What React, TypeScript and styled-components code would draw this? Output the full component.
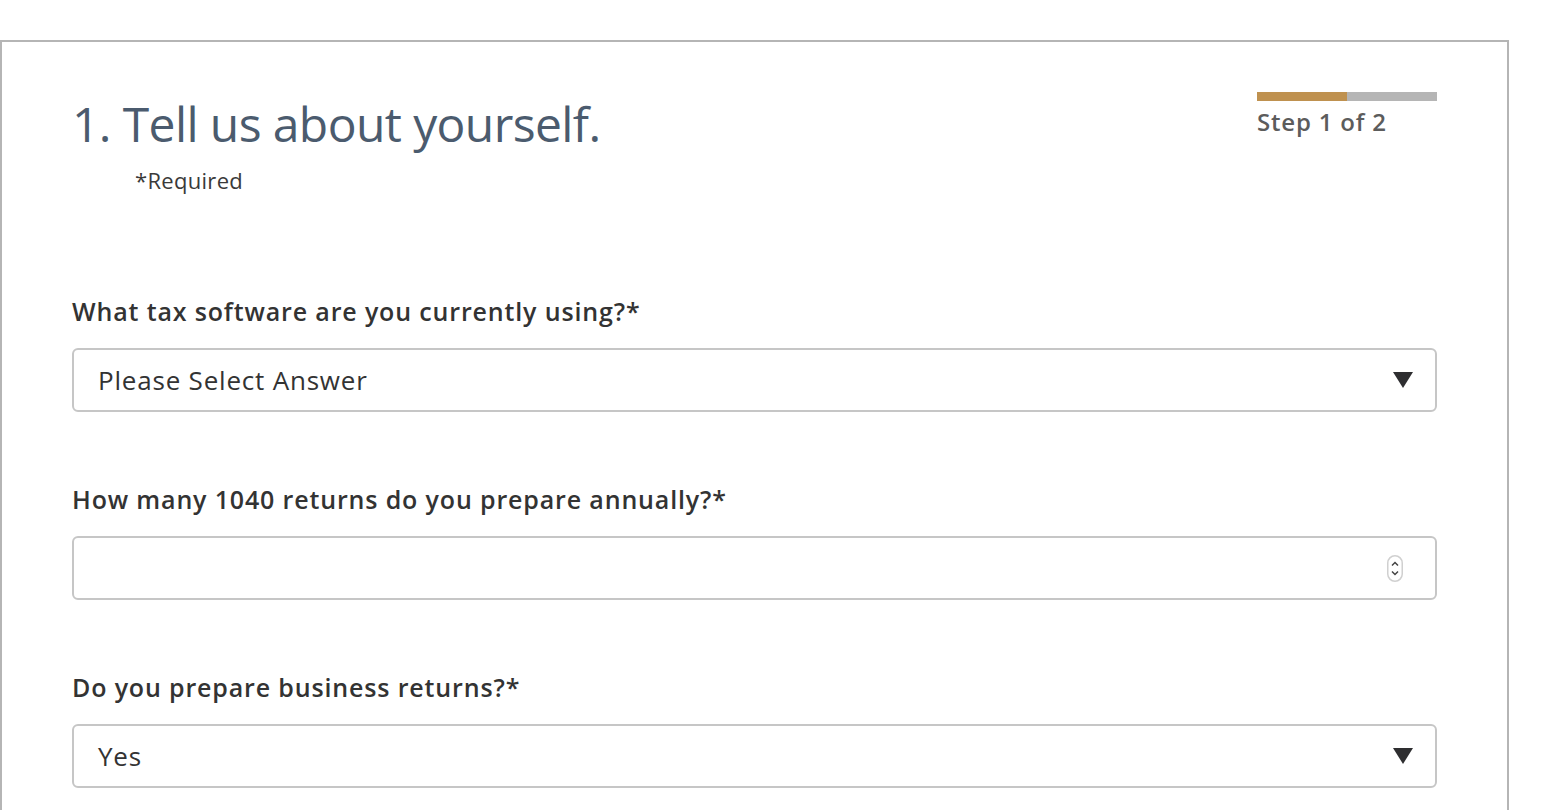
import React from "react";
import styled, { createGlobalStyle } from "styled-components";

const Global = createGlobalStyle`
  html, body { margin: 0; padding: 0; background: #fff; }
  body { font-family: "Open Sans", Lato, sans-serif; overflow: hidden; }
`;

const Card = styled.div`
  margin-top: 40px;
  width: 1509px;
  box-sizing: border-box;
  border: 2px solid #b5b5b5;
  padding: 0 70px 0 70px;
  height: 900px;
`;

const Header = styled.div`
  display: flex;
  justify-content: space-between;
  align-items: flex-start;
`;

const TitleBlock = styled.div`
  padding-top: 51px;
`;

const Title = styled.h1`
  margin: 0;
  font-family: "Open Sans", sans-serif;
  font-weight: 400;
  font-size: 48px;
  line-height: 62px;
  color: #4b5b6e;
  letter-spacing: -0.6px;
`;

const Required = styled.div`
  margin: 12px 0 0 63px;
  font-size: 22px;
  line-height: 26px;
  color: #3a3a3a;
  letter-spacing: 0.3px;
`;

const Stepper = styled.div`
  width: 180px;
  padding-top: 50px;
`;

const Bar = styled.div`
  display: flex;
  height: 9px;
  background: #b5b5b5;
`;

const BarFill = styled.div<{ $pct: number }>`
  width: ${(p) => p.$pct}%;
  background: #bf914f;
`;

const StepText = styled.div`
  margin-top: 6px;
  font-size: 24px;
  line-height: 30px;
  color: #5c5c5c;
  font-weight: 600;
  letter-spacing: 0.8px;
`;

const Fields = styled.div`
  padding-top: 103px;
  display: flex;
  flex-direction: column;
  gap: 72px;
`;

const Field = styled.div`
  display: flex;
  flex-direction: column;
  gap: 22px;
`;

const Label = styled.label`
  font-size: 25px;
  line-height: 30px;
  font-weight: 600;
  color: #333;
  letter-spacing: 0.85px;
`;

const Box = styled.div`
  height: 64px;
  box-sizing: border-box;
  border: 2px solid #c6c6c6;
  border-radius: 6px;
  display: flex;
  align-items: center;
  justify-content: space-between;
  padding: 0 22px 0 24px;
  font-size: 26px;
  letter-spacing: 0.8px;
  color: #333;
`;

const Caret = styled.span`
  width: 0;
  height: 0;
  border-left: 10px solid transparent;
  border-right: 10px solid transparent;
  border-top: 16px solid #2e2e30;
`;

const Spin = styled.svg`
  margin-right: 10px;
`;

function Select({ value }: { value: string }) {
  return (
    <Box>
      <span>{value}</span>
      <Caret />
    </Box>
  );
}

export default function App() {
  return (
    <>
      <Global />
      <Card>
        <Header>
          <TitleBlock>
            <Title>1. Tell us about yourself.</Title>
            <Required>*Required</Required>
          </TitleBlock>
          <Stepper>
            <Bar>
              <BarFill $pct={50} />
            </Bar>
            <StepText>Step 1 of 2</StepText>
          </Stepper>
        </Header>
        <Fields>
          <Field>
            <Label>What tax software are you currently using?*</Label>
            <Select value="Please Select Answer" />
          </Field>
          <Field>
            <Label>How many 1040 returns do you prepare annually?*</Label>
            <Box>
              <span />
              <Spin width="16" height="27" viewBox="0 0 16 27">
                <rect x="0.75" y="0.75" width="14.5" height="25.5" rx="7.25" fill="#fff" stroke="#d0d0d0" strokeWidth="1.5" />
                <path d="M5 10.5 L8 7.5 L11 10.5" fill="none" stroke="#444" strokeWidth="1.5" />
                <path d="M5 16.5 L8 19.5 L11 16.5" fill="none" stroke="#444" strokeWidth="1.5" />
              </Spin>
            </Box>
          </Field>
          <Field>
            <Label>Do you prepare business returns?*</Label>
            <Select value="Yes" />
          </Field>
        </Fields>
      </Card>
    </>
  );
}
